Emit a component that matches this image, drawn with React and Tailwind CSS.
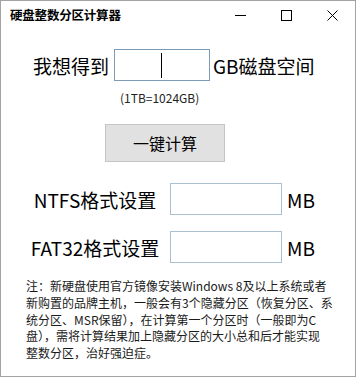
export default function App() {
  return (
    <div className="w-[356px] h-[377px] border border-[#a3a3a3] bg-white flex flex-col font-['Noto_Sans_CJK_SC','Noto_Sans',sans-serif] text-black overflow-hidden">
      {/* Title bar */}
      <div className="h-[29px] flex items-center shrink-0">
        <div className="pl-[9px] text-[12.5px] font-bold leading-none tracking-[-0.2px]">硬盘整数分区计算器</div>
        <div className="ml-auto flex h-full">
          <div className="w-[46px] h-full flex items-center justify-center">
            <svg width="11" height="11" viewBox="0 0 11 11">
              <path d="M0 5.5H11" stroke="#000" strokeWidth="1" />
            </svg>
          </div>
          <div className="w-[46px] h-full flex items-center justify-center">
            <svg width="11" height="11" viewBox="0 0 11 11">
              <rect x="0.5" y="0.5" width="10" height="10" fill="none" stroke="#000" strokeWidth="1" />
            </svg>
          </div>
          <div className="w-[46px] h-full flex items-center justify-center">
            <svg width="11" height="11" viewBox="0 0 11 11">
              <path d="M0.5 0.5L10.5 10.5M10.5 0.5L0.5 10.5" stroke="#000" strokeWidth="1" />
            </svg>
          </div>
        </div>
      </div>

      {/* Desired size row */}
      <div className="mt-[19px] h-[32px] flex items-center pl-[32px]">
        <span className="text-[19px] leading-none">我想得到</span>
        <div className="ml-[5px] w-[96px] h-[32px] border border-[#7a9cb8] flex items-center">
          <div className="ml-[46px] w-px h-[25px] bg-black" />
        </div>
        <span className="ml-[3px] text-[19px] leading-none">GB磁盘空间</span>
      </div>

      <div className="mt-[10px] pl-[119px] text-[12px] leading-[14px] text-[#222]">(1TB=1024GB)</div>

      {/* Calculate button */}
      <div className="mt-[19px] pl-[104px]">
        <button className="w-[120px] h-[38px] bg-[#e1e1e1] border border-[#c6c6c6] text-[16px] leading-none flex items-center justify-center">
          一键计算
        </button>
      </div>

      {/* NTFS */}
      <div className="mt-[21px] h-[32px] flex items-center pl-[19px]">
        <span className="w-[150px] text-center text-[19px] leading-none">NTFS格式设置</span>
        <div className="w-[112px] h-[32px] border border-[#abc0cf]" />
        <span className="ml-[5px] text-[19px] leading-none">MB</span>
      </div>

      {/* FAT32 */}
      <div className="mt-[16px] h-[32px] flex items-center pl-[19px]">
        <span className="w-[150px] text-center text-[19px] leading-none">FAT32格式设置</span>
        <div className="w-[112px] h-[32px] border border-[#abc0cf]" />
        <span className="ml-[5px] text-[19px] leading-none">MB</span>
      </div>

      {/* Note */}
      <div className="mt-[15px] pl-[25px] text-[12px] leading-[16.8px] text-[#1a1a1a] whitespace-nowrap">
        <div>注：新硬盘使用官方镜像安装Windows 8及以上系统或者</div>
        <div>新购置的品牌主机，一般会有3个隐藏分区（恢复分区、系</div>
        <div>统分区、MSR保留），在计算第一个分区时（一般即为C</div>
        <div>盘），需将计算结果加上隐藏分区的大小总和后才能实现</div>
        <div>整数分区，治好强迫症。</div>
      </div>
    </div>
  );
}
